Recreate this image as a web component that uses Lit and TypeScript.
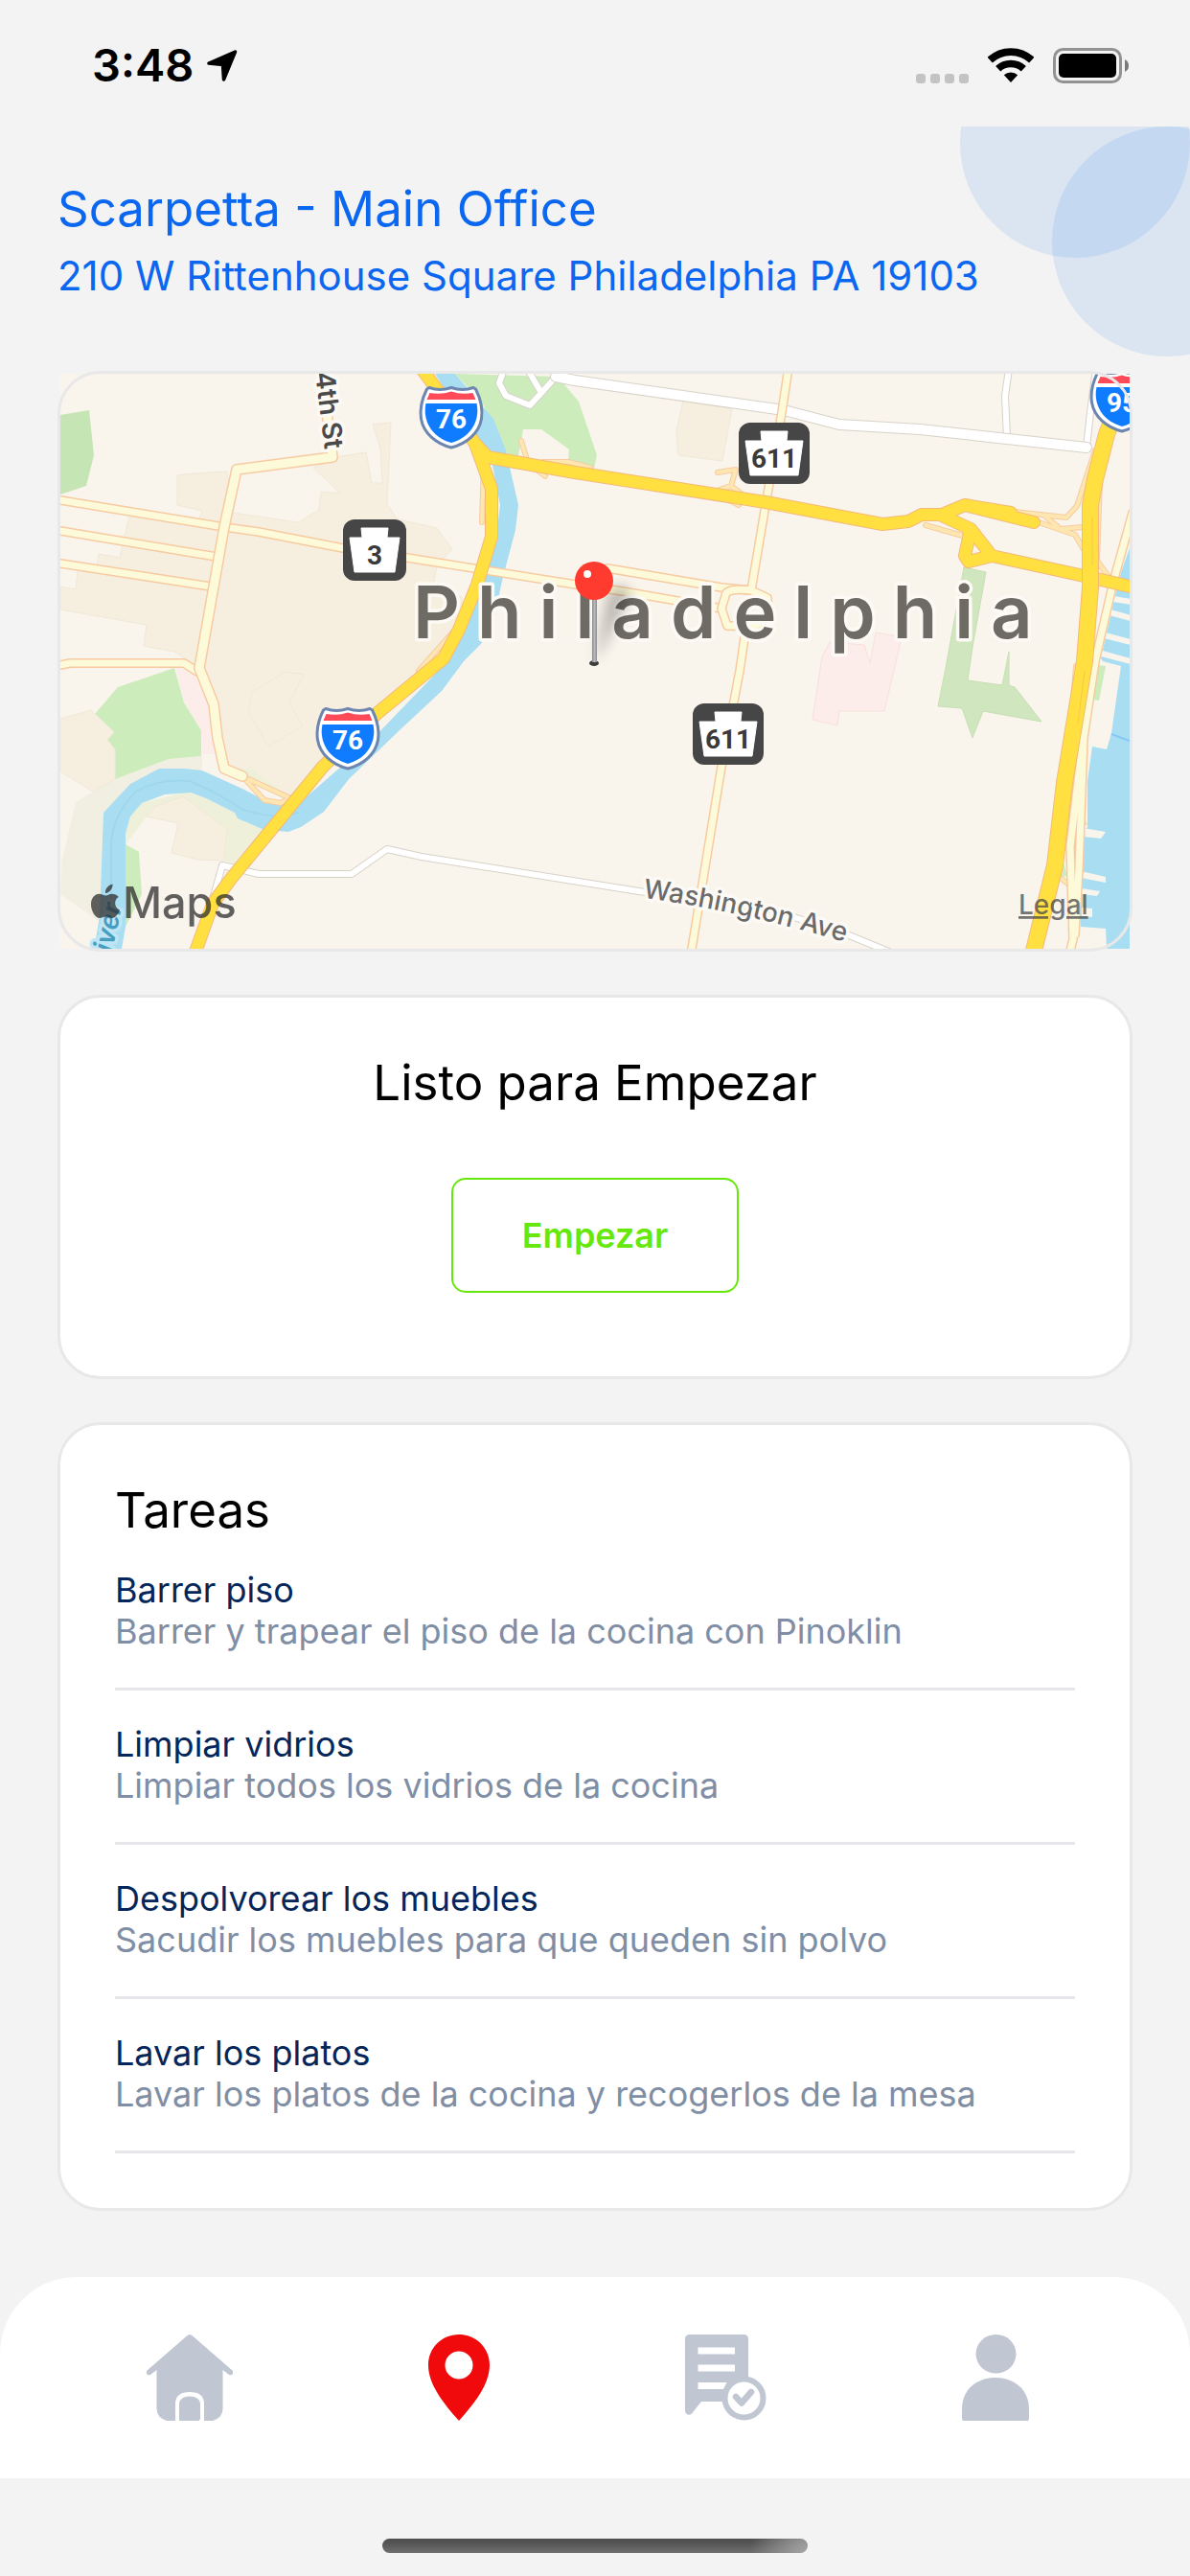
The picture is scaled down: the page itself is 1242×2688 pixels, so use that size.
import { LitElement, html, css, svg } from "lit";
import { customElement, property } from "lit/decorators.js";

interface Task {
  title: string;
  detail: string;
}

const TASKS: Task[] = [
  { title: "Barrer piso", detail: "Barrer y trapear el piso de la cocina con Pinoklin" },
  { title: "Limpiar vidrios", detail: "Limpiar todos los vidrios de la cocina" },
  { title: "Despolvorear los muebles", detail: "Sacudir los muebles para que queden sin polvo" },
  { title: "Lavar los platos", detail: "Lavar los platos de la cocina y recogerlos de la mesa" },
];

@customElement("status-bar")
class StatusBar extends LitElement {
  static styles = css`
    :host {
      display: block;
      color: #000;
    }
    .bar {
      display: flex;
      justify-content: space-between;
      align-items: center;
      height: 132px;
      padding: 4px 64px 0 96px;
      box-sizing: border-box;
    }
    .left,
    .right,
    .dots {
      display: flex;
      align-items: center;
    }
    .left {
      gap: 14px;
    }
    .time {
      font-size: 47px;
      line-height: 56px;
      font-weight: 600;
    }
    .right {
      gap: 20px;
    }
    .dots {
      gap: 5px;
      align-self: flex-end;
    }
    .dot {
      width: 10px;
      height: 10px;
      border-radius: 3px;
      background: #c3c3c3;
    }
    svg {
      display: block;
    }
  `;

  render() {
    return html`
      <div class="bar">
        <div class="left">
          <span class="time">3:48</span>
          <svg width="32" height="33" viewBox="0 0 32 33" aria-hidden="true">
            <path d="M2 14 L29.500 2 L17.500 31 L16.500 15.500Z" stroke="#000" stroke-width="3.500" stroke-linejoin="round" />
          </svg>
        </div>
        <div class="right">
          <div class="dots">
            <span class="dot"></span><span class="dot"></span><span class="dot"></span><span class="dot"></span>
          </div>
          <svg width="48" height="36" viewBox="0 0 48 36" aria-hidden="true">
            <path d="M2.200 12.600A32 32 0 0 1 45.800 12.600" fill="none" stroke="#000" stroke-width="7.800" />
            <path d="M10.700 21.700A19.500 19.500 0 0 1 37.300 21.700" fill="none" stroke="#000" stroke-width="7.600" />
            <path d="M24 36L16.800 28.300A11 11 0 0 1 31.200 28.300Z" />
          </svg>
          <svg width="79" height="37" viewBox="0 0 79 37" aria-hidden="true">
            <rect x="1.500" y="1.500" width="69" height="34" rx="9" fill="none" stroke="#929292" stroke-width="3" />
            <rect x="6" y="6" width="60" height="25" rx="5" />
            <path d="M75 12Q79 14 79 18.500T75 25Z" fill="#7a7a7a" />
          </svg>
        </div>
      </div>
    `;
  }
}

const interstate = (x: number, y: number, label: string) => svg`
  <g transform="translate(${x} ${y})">
    <path d="M-23 1.500Q-12 5.500 0 1.500Q12 5.500 23 1.500L25.500 3C31 14 33 24 31.500 34C29 49 16 60 0 64C-16 60 -29 49 -31.500 34C-33 24 -31 14 -25.500 3Z"
      fill="#fff" stroke="#6d86b0" stroke-width="3" stroke-linejoin="round" />
    <path d="M-22.500 7Q-10 9 0 5.500Q10 9 22.500 7L25.500 14H-25.500Z" fill="#ff4a58" />
    <path d="M-26.500 18H26.500C30 34 22 53 0 59C-22 53 -30 34 -26.500 18Z" fill="#0f7bff" />
    <text class="shield" x="0" y="44" fill="#fff">${label}</text>
  </g>
`;

const stateRoute = (x: number, y: number, width: number, label: string) => {
  const h = width / 2;
  return svg`
    <g transform="translate(${x} ${y})">
      <rect x=${-h} y="0" width=${width} height="64" rx="12" fill="#464646" />
      <path d="M-14 9H14L13 19H${h - 7}L${h - 12} 55H${12 - h}L${7 - h} 19H-13Z"
        fill="#fff" stroke="#fff" stroke-width="1" stroke-linejoin="round" />
      <text class="route" x="0" y="47" fill="#3a3a3a">${label}</text>
    </g>
  `;
};

const road = (kind: string, d: string) => svg`
  <path class="line ${kind}-case" d=${d} />
  <path class="line ${kind}" d=${d} />
`;

const LOCAL =
  "M341 430L347 477L247 490L234 550L208 697L223 735L227 770L234 802L253 810";
const STREETS =
  "M63 522L234 550L270 555L358 572L425 582L601 610L650 617L753 635" +
  "M63 554L226 581M63 588L220 612M634 593L753 613L784 616" +
  "M63 694L73 692H192L206 701";
const BROAD =
  "M822 390L816 430L799 527L784 616Q757 613 757 622L753 635L759 653L787 654Q803 645 801 624L784 616" +
  "M779 652L772 700L753 800L722 990";
const DELAWARE =
  "M1182 535L1162 607L1143 690L1128 790L1117 883L1120 980L1117 992M1131 770L1126 907L1122 975";
const RAMPS =
  "M749 493L768 490L763 507L745 513M763 507L780 520M761 522L771 527" +
  "M1059 534L1113 540L1124 528L1143 470M1084 545L1122 558L1132 575M1090 538L1107 552L1130 550" +
  "M505 483L503 545M544 460L551 483L569 497M567 482L593 482L616 488" +
  "M253 810L276 835L293 838L312 828M253 810L301 832M475 657L437 700" +
  "M1148 500L1145 585L1160 606M966 548L1008 560M1123 695L1105 915M1108 917L1118 925";
const HIGHWAYS =
  "M438 382L470 425L496 463L513 510L513 560L498 610L479 657L463 687L394 744L337 800L241 917L222 943L203 996" +
  "M496 463L509 477L600 493L799 524L921 547L948 544L962 537L983 537L1007 527L1055 535M1007 527L1079 545" +
  "M983 538L1013 552L1035 580L1136 602L1184 613M1013 552L1007 580L1011 586L1035 580";
const INTERSTATE_95 =
  "M1168 420L1155 453L1143 500L1138 527L1138 613L1132 690L1111 817L1101 903L1078 996";
const AVENUES = "M580 393L600 397L818 428L876 443L960 448L1134 467";
const MINOR =
  "M1134 467L1138 430L1144 385M1053 385L1049 413L1051 457" +
  "M525 388L521 400L528 413L553 423L565 410L582 391M551 386L565 410" +
  "M223 935L232 903L270 912L367 912L404 886L440 894L673 931L800 948L879 973L930 994";

@customElement("city-map")
class CityMap extends LitElement {
  static styles = css`
    :host {
      display: block;
    }
    .map {
      display: block;
      width: 100%;
      height: auto;
    }
    text {
      font-family: Inter, Roboto, "Liberation Sans", sans-serif;
    }
    .line {
      fill: none;
      stroke-linecap: round;
      stroke-linejoin: round;
    }
    .street-case { stroke: #f7cba2; stroke-width: 10; }
    .street { stroke: #fdfada; stroke-width: 7; }
    .local-case { stroke: #f7cba2; stroke-width: 12; }
    .local { stroke: #fdfada; stroke-width: 9; }
    .ramp-case { stroke: #f7cba2; stroke-width: 6; }
    .ramp { stroke: #fde6b0; stroke-width: 4; }
    .highway-case { stroke: #f5b97a; stroke-width: 14; }
    .highway { stroke: #ffe040; stroke-width: 12; }
    .major-case { stroke: #f5b97a; stroke-width: 18; }
    .major { stroke: #ffe040; stroke-width: 16; }
    .avenue-case { stroke: #d8d2c8; stroke-width: 12; }
    .avenue { stroke: #fff; stroke-width: 10; }
    .minor-case { stroke: #d8d2c8; stroke-width: 8; }
    .minor { stroke: #fff; stroke-width: 6; }
    .field { fill: #f6efdf; stroke: #f0e8d8; stroke-width: 1; }
    .park { fill: #cdecbc; }
    .rose { fill: #fcedea; }
    .water { fill: #a9def2; }
    .halo {
      paint-order: stroke;
      stroke: #fdfaf5;
      stroke-width: 7;
      stroke-linejoin: round;
    }
    .city {
      font-size: 76px;
      font-weight: 600;
      letter-spacing: 18px;
      fill: #6e6b64;
    }
    .street-name {
      font-size: 28px;
      font-weight: 500;
      fill: #6b6b6b;
    }
    .dark {
      font-weight: 600;
      fill: #4a4a4a;
    }
    .river-name {
      font-size: 28px;
      font-weight: 600;
      font-style: italic;
      fill: #459dc2;
      stroke: #bfe6f4;
    }
    .shield,
    .route {
      font-family: Roboto, "Liberation Sans", sans-serif;
      font-size: 28px;
      font-weight: 700;
      text-anchor: middle;
    }
    .brand {
      font-size: 45px;
      font-weight: 500;
      fill: #2e2e2e;
    }
    .legal {
      font-size: 28px;
      font-weight: 500;
      fill: #4a4a4a;
      fill-opacity: 0.75;
      text-decoration: underline;
    }
  `;

  render() {
    return html`
      <svg class="map" viewBox="63 390 1116 600" role="img" aria-label="Philadelphia">
        <defs>
          <linearGradient id="needle">
            <stop offset="0" stop-color="#8a8a8c" />
            <stop offset="0.500" stop-color="#b9b9bb" />
            <stop offset="1" stop-color="#8a8a8c" />
          </linearGradient>
          <filter id="soft" x="-100%" y="-50%" width="300%" height="200%">
            <feGaussianBlur stdDeviation="7" />
          </filter>
          <path id="washington" d="M671 937Q775 950 905 990" />
        </defs>
        <rect x="63" y="390" width="1116" height="600" fill="#f9f4ec" />

        <path class="field" d="M135 538L208 548L208 542L211 533L185 527V496L203 494L237 492L243 535L311 545L333 532L335 513L355 515L327 488L350 477L382 472L388 504H399L397 468L389 443L408 441L404 526L415 542L456 551L472 573L456 590L452 612L482 623V657L436 700L387 747L318 823L299 828L253 810L236 802L228 770L226 737L209 697L182 680L150 674L153 652L63 636V612L79 615L81 596L101 593L103 578L125 582Z" />
        <path class="field" fill-opacity="0" d="M263 722L298 701L317 704L302 733L316 758L280 778L259 743Z" />
        <path class="field" d="M713 418L764 427L754 481L708 475L706 450Z" />
        <path d="M63 433L93 428L98 475L90 507L63 516Z" fill="#c5e6b4" />
        <path class="park" d="M475 390L582 393L604 419L623 475L620 489L593 480L594 469L565 448H546L541 476L530 475L503 420Z" />
        <path d="M79 837L120 813L176 792L211 789V812L130 834L112 862L106 963L63 933L65 897Z" fill="#f1efe1" />
        <path class="park" d="M123 717L182 697L192 733L210 762V789L176 792L120 813V782L112 772L119 764L99 745Z" />
        <path class="rose" d="M184 697L197 700L216 720L226 787H211L210 762L192 733Z" />
        <path class="field" d="M63 750L95 741L119 764L112 772L120 782V813L97 826L63 805Z" />
        <path d="M131 881V870L136 852L148 838L195 826L215 833L245 848L276 866L249 903L234 898L237 865L191 831L161 842L153 852Z" fill="#eef0d9" />
        <path class="field" d="M161 842L191 831L237 865L234 898L207 897L179 890L186 859L153 852Z" />
        <path class="park" d="M131 881L145 889L148 933L131 967Z" />
        <path d="M240 802L262 802L290 822L280 824Z" fill="#eef0d9" />
        <path d="M1006 592L1029 597L1015 675L1010 710L1046 715L1053 680V715L1059 717L1087 753L1026 742L1015 770L1004 739L979 737L987 697Z" fill="#d0e6be" stroke="#c7dfb4" stroke-width="1" />
        <path class="rose" d="M866 670L902 673L908 692L914 660L941 665L923 742H876L874 757L848 751L858 685Z" stroke="#f9e0dc" stroke-width="1" />

        <path class="water" d="M454 390H475L515 437L528 470L541 527L538 553L525 602L515 647L502 672L484 690L461 721L417 762L364 813L338 847L314 863L301 868L276 866L248 854L245 848L215 833L199 827L172 829L148 838L136 852L131 870V967L127 990H98L104 957L108 848L136 818L166 802H192L211 804L253 823L276 835L301 838L318 833L387 773L467 690L485 650L507 600L518 560L522 527L513 480L495 450L470 415Z" />
        <path d="M116 975V880Q118 850 142 826Q165 812 198 815Q225 826 252 844Q285 856 312 848" fill="none" stroke="#9fd7ee" stroke-width="2" />
        <path class="water" d="M1179 572L1170 597L1163 625L1149 687L1151 690L1170 695L1160 765L1155 782L1140 779L1135 815V863L1128 873L1127 923L1128 967L1154 969L1155 990H1179Z" />
        <path d="M1162 625L1180 628M1158 639L1180 645M1153 663L1180 670M1150 682L1180 690" stroke="#f9f4ec" stroke-width="6" />
        <path d="M1130 864L1154 868L1149 875L1130 873ZM1128 909L1154 915V921L1128 916ZM1129 927L1148 930L1145 935L1129 933ZM1129 947L1140 948V957L1129 956Z" fill="#f9f4ec" />
        <path d="M1145 694L1154 695L1147 731L1140 730Z" class="park" />
        <path d="M1131 850L1135 861L1130 861ZM1110 900L1114 915L1108 914Z" class="park" />
        <path d="M1160 766L1179 773" stroke="#86c8f5" stroke-width="2" />

        ${road("minor", MINOR)} ${road("avenue", AVENUES)} ${road("ramp", RAMPS)}
        ${road("street", STREETS)} ${road("street", BROAD)} ${road("street", DELAWARE)}
        ${road("local", LOCAL)} ${road("highway", HIGHWAYS)} ${road("major", INTERSTATE_95)}
        <path d="M1140 540V590M1132 700L1125 755" stroke="#f5c84a" stroke-width="1" />

        <text class="street-name dark halo" transform="translate(329 389) rotate(83)">4th St</text>
        <text class="street-name halo"><textPath href="#washington">Washington Ave</textPath></text>
        <text class="river-name halo" transform="translate(113 1012) rotate(-78)">River</text>
        ${interstate(471, 403, "76")} ${interstate(363, 738, "76")} ${interstate(1171, 386, "95")}
        ${stateRoute(391, 542, 66, "3")} ${stateRoute(808, 441, 74, "611")} ${stateRoute(760, 734, 74, "611")}
        <text class="city halo" x="431" y="666">Philadelphia</text>

        <path d="M621 692L634 622Q650 600 658 622Z" fill="#000" opacity="0.250" filter="url(#soft)" />
        <ellipse cx="620" cy="692" rx="5" ry="3" fill="#3c3c3c" />
        <rect x="618" y="622" width="5" height="69" fill="url(#needle)" />
        <circle cx="620" cy="606" r="20" fill="#ff3b2f" />
        <circle cx="613" cy="599" r="4" fill="#fff" />

        <g opacity="0.750">
          <path d="M117.500 922.500C113 923.500 109.500 927.500 110 932C114.500 931.500 118 927 117.500 922.500ZM110.500 934.500C108 934.500 106 932.800 103.500 932.800C99 932.800 95 937 95 943.500C95 950.500 99.500 958 104 958C106.500 958 107.500 956.500 110.500 956.500C113.500 956.500 114.500 958 117 958C120.500 958 123.500 953.500 125 949.500C119 947 118.500 939 123.800 936C122 933.800 119.500 932.800 117 932.800C114.500 932.800 112.500 934.500 110.500 934.500Z" fill="#2e2e2e" />
          <text class="brand" x="128" y="958">Maps</text>
        </g>
        <a href="#legal"><text class="legal" x="1063" y="954">Legal</text></a>
      </svg>
    `;
  }
}

@customElement("task-item")
class TaskItem extends LitElement {
  @property() heading = "";
  @property() detail = "";

  static styles = css`
    :host {
      display: block;
      padding: 29px 0 37px;
      border-bottom: 3px solid #e6e7eb;
    }
    .heading,
    .detail {
      margin: 0;
      font-size: 36px;
      line-height: 43px;
      font-weight: 400;
    }
    .heading {
      color: #04265a;
    }
    .detail {
      color: #808ea5;
    }
  `;

  render() {
    return html`
      <h3 class="heading">${this.heading}</h3>
      <p class="detail">${this.detail}</p>
    `;
  }
}

@customElement("tab-bar")
class TabBar extends LitElement {
  static styles = css`
    :host {
      display: block;
    }
    .tabs {
      display: flex;
      justify-content: space-between;
      align-items: center;
      height: 210px;
      box-sizing: border-box;
      padding: 0 168px 0 153px;
      border-radius: 80px 80px 0 0;
      background: #fff;
    }
    .tab {
      display: block;
      color: #c0c7d2;
    }
    .active {
      color: #f00a0b;
    }
    svg {
      display: block;
      fill: currentColor;
    }
  `;

  render() {
    return html`
      <nav class="tabs">
        <a class="tab" href="#inicio" aria-label="Inicio">
          <svg width="90" height="90" viewBox="0 0 90 90">
            <path d="M45 0Q43.500 0 42 1.500L0 38V41Q1.500 43 4 42L10.500 37V78Q11 87 21 90H30V71Q31 60 45 60Q59 60 60 71V90H69Q79 87 79.500 78V37L86 42Q88.500 43 90 41V38L48 1.500Q46.500 0 45 0Z" />
            <path d="M34 90V72Q35 64.500 45 64.500Q55 64.500 56 72V88L54.500 90H35.500Z" />
          </svg>
        </a>
        <a class="tab active" href="#lugar" aria-label="Lugar" aria-current="page">
          <svg width="64" height="90" viewBox="0 0 64 90">
            <path fill-rule="evenodd" d="M32 0C50 0 64 14 64 32C64 52 48 72 32 90C16 72 0 52 0 32C0 14 14 0 32 0ZM32 17.500A14.500 14.500 0 1 0 32 46.500A14.500 14.500 0 1 0 32 17.500Z" />
          </svg>
        </a>
        <a class="tab" href="#tareas" aria-label="Tareas">
          <svg width="85" height="90" viewBox="0 0 85 90">
            <path d="M4 0H62Q66 0.500 66 5V70H17L7 82.500Q4 85 1 82.500L0 80V4Q0.500 0.500 4 0Z" />
            <path d="M13.500 13.500H52V20.500H13.500ZM13.500 31.500H52V38.500H13.500ZM13.500 50H43.500L40 57H13.500Z" fill="#fff" />
            <circle cx="61.500" cy="66.500" r="20" fill="#fff" stroke="currentColor" stroke-width="6" />
            <path d="M53 65L59 71.500L69 60" fill="none" stroke="currentColor" stroke-width="6.500" stroke-linecap="round" stroke-linejoin="round" />
          </svg>
        </a>
        <a class="tab" href="#perfil" aria-label="Perfil">
          <svg width="70" height="90" viewBox="0 0 70 90">
            <ellipse cx="35.500" cy="20.300" rx="21" ry="20.300" />
            <path d="M0 78C0 57 16 45 35 45C54 45 70 57 70 78V88L69 90H1L0 88Z" />
          </svg>
        </a>
      </nav>
    `;
  }
}

@customElement("app-root")
class AppRoot extends LitElement {
  static styles = css`
    :host {
      display: block;
      font-family: Inter, Roboto, "Liberation Sans", sans-serif;
      background: #f3f3f3;
    }
    .screen {
      display: flex;
      flex-direction: column;
      min-height: 100vh;
      position: relative;
      overflow: hidden;
    }
    .bubbles {
      position: absolute;
      top: 132px;
      right: 0;
      display: block;
    }
    .content {
      position: relative;
      flex: 1;
      display: flex;
      flex-direction: column;
      gap: 45px;
      padding: 53px 60px 69px;
    }
    .place {
      display: flex;
      flex-direction: column;
      gap: 10px;
      margin-bottom: 27px;
      color: #0b67f0;
    }
    .title {
      margin: 0;
      font-size: 51px;
      line-height: 66px;
      font-weight: 400;
    }
    .address {
      margin: 0;
      font-size: 42px;
      line-height: 54px;
    }
    .map-frame {
      position: relative;
      padding: 3px;
    }
    .map-frame::after {
      content: "";
      position: absolute;
      inset: 0;
      border: 3px solid #e8e8e9;
      border-radius: 45px;
      pointer-events: none;
    }
    .card {
      box-sizing: border-box;
      border: 3px solid #e8e8e9;
      border-radius: 45px;
      background: #fff;
      padding: 56px 57px 57px;
      color: #000;
    }
    .start {
      display: flex;
      flex-direction: column;
      align-items: center;
      gap: 66px;
      padding-bottom: 87px;
    }
    .start-button {
      width: 300px;
      height: 120px;
      border: 2px solid #66e80c;
      border-radius: 15px;
      background: #fff;
      color: #66e80c;
      font-family: inherit;
      font-size: 36px;
      line-height: 43px;
      font-weight: 600;
    }
    .tasks {
      display: flex;
      flex-direction: column;
      gap: 6px;
    }
    .home-area {
      display: flex;
      justify-content: center;
      align-items: flex-start;
      height: 102px;
      padding-top: 63px;
      box-sizing: border-box;
    }
    .home-indicator {
      width: 444px;
      height: 15px;
      border-radius: 8px;
      background:
        radial-gradient(circle 60px at 100% 100%, #a6a6a6, rgba(166, 166, 166, 0)),
        linear-gradient(#4e4e4e, #555 30%, #6f6f6f);
    }
  `;

  render() {
    return html`
      <div class="screen">
        <svg class="bubbles" width="240" height="240" viewBox="1002 132 240 240" aria-hidden="true">
          <g fill="#0b67f0" fill-opacity="0.100">
            <circle cx="1122" cy="149" r="120" />
            <circle cx="1218" cy="252" r="120" />
          </g>
        </svg>
        <status-bar></status-bar>
        <main class="content">
          <header class="place">
            <h1 class="title">Scarpetta - Main Office</h1>
            <p class="address">210 W Rittenhouse Square Philadelphia PA 19103</p>
          </header>
          <div class="map-frame"><city-map></city-map></div>
          <section class="card start">
            <h2 class="title">Listo para Empezar</h2>
            <button class="start-button" type="button">Empezar</button>
          </section>
          <section class="card">
            <h2 class="title">Tareas</h2>
            <div class="tasks">
              ${TASKS.map((t) => html`<task-item .heading=${t.title} .detail=${t.detail}></task-item>`)}
            </div>
          </section>
        </main>
        <tab-bar></tab-bar>
        <div class="home-area"><div class="home-indicator"></div></div>
      </div>
    `;
  }
}
